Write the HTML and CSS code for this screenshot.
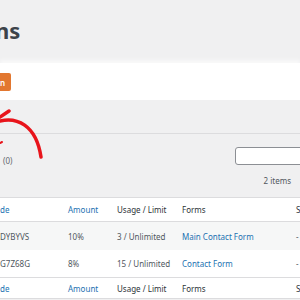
FILE: index.html
```html
<!DOCTYPE html>
<html>
<head>
<meta charset="utf-8">
<link rel="stylesheet" href="styles.css">
</head>
<body>
<div class="page">
  <header class="page-head">
    <h1 class="title">ns</h1>
  </header>
  <div class="toolbar">
    <a class="btn">n</a>
  </div>
  <main class="main">
    <div class="tabs"></div>
    <div class="filters">
      <span class="count">(0)</span>
      <input class="search" type="text">
    </div>
    <div class="items">2 items</div>
    <div class="table">
      <div class="row head">
        <span class="link">de</span>
        <span class="link">Amount</span>
        <span>Usage / Limit</span>
        <span>Forms</span>
        <span>S</span>
      </div>
      <div class="row body alt">
        <span>DYBYVS</span>
        <span>10%</span>
        <span>3 / Unlimited</span>
        <span class="link">Main Contact Form</span>
        <span>-</span>
      </div>
      <div class="row body">
        <span>G7Z68G</span>
        <span>8%</span>
        <span>15 / Unlimited</span>
        <span class="link">Contact Form</span>
        <span>-</span>
      </div>
      <div class="row head foot">
        <span class="link">de</span>
        <span class="link">Amount</span>
        <span>Usage / Limit</span>
        <span>Forms</span>
        <span>S</span>
      </div>
    </div>
  </main>
  <svg class="arrow" width="60" height="70" viewBox="0 100 60 70">
    <path d="M0 121 C 16 117, 36 124, 41 157" fill="none" stroke="#e8141b" stroke-width="3.5" stroke-linecap="round"/>
    <path d="M0 117 L9 111" fill="none" stroke="#e8141b" stroke-width="3.5" stroke-linecap="round"/>
    <path d="M0 143 L2 142" fill="none" stroke="#e8141b" stroke-width="2" stroke-linecap="round"/>
  </svg>
</div>
</body>
</html>
```
FILE: styles.css
```css
html, body {
  margin: 0;
  padding: 0;
}
body {
  width: 300px;
  height: 300px;
  overflow: hidden;
  background: #f0f0f1;
  font-family: "Noto Sans", "Open Sans", sans-serif;
  font-size: 8px;
  color: #50575e;
}
.page {
  position: relative;
  width: 300px;
  height: 300px;
}
.page-head {
  height: 63px;
  background: #f0f0f1;
  box-sizing: border-box;
  padding-top: 17px;
}
.title {
  margin: 0 0 0 -5px;
  font-size: 22px;
  line-height: 26px;
  font-weight: 700;
  color: #3c434a;
}
.toolbar {
  height: 37px;
  background: #fff;
  box-sizing: border-box;
  padding-top: 10px;
  box-shadow: 0 -3px 4px rgba(255,255,255,0.6);
}
.btn {
  display: flex;
  align-items: center;
  justify-content: flex-end;
  width: 11px;
  height: 18px;
  box-sizing: border-box;
  padding-right: 6px;
  background: #e27730;
  border-radius: 0 2px 2px 0;
  color: #fff;
  font-weight: 600;
  font-size: 8px;
}
.main {
  display: flex;
  flex-direction: column;
}
.tabs {
  height: 33px;
  border-bottom: 1px solid #dcdcde;
}
.filters {
  display: flex;
  justify-content: space-between;
  align-items: flex-end;
  margin-top: 13px;
  height: 19px;
}
.count {
  padding-left: 3px;
  line-height: 10px;
  color: #646970;
}
.search {
  width: 70px;
  height: 18px;
  box-sizing: border-box;
  margin: 0 -5px 1px 0;
  border: 1px solid #8c8f94;
  border-radius: 3px;
  background: #fff;
  padding: 0;
}
.items {
  margin-top: 10px;
  line-height: 10px;
  text-align: right;
  padding-right: 9px;
  color: #50575e;
}
.table {
  margin-top: 11px;
  border-top: 1px solid #dcdcde;
  border-bottom: 1px solid #dcdcde;
  background: #fff;
}
.row {
  display: grid;
  grid-template-columns: 68px 49px 65px 114px 1fr;
  align-items: center;
  white-space: nowrap;
}
.row.head {
  height: 23px;
  border-bottom: 1px solid #dcdcde;
  color: #2c3338;
}
.row.body {
  height: 28px;
}
.row.body + .row.body {
  height: 27px;
}
.row.alt {
  background: #f6f7f7;
}
.row.foot {
  border-bottom: none;
  border-top: 1px solid #dcdcde;
  height: 20px;
}
.link {
  color: #2271b1;
}
.arrow {
  position: absolute;
  left: 0;
  top: 100px;
}
```
